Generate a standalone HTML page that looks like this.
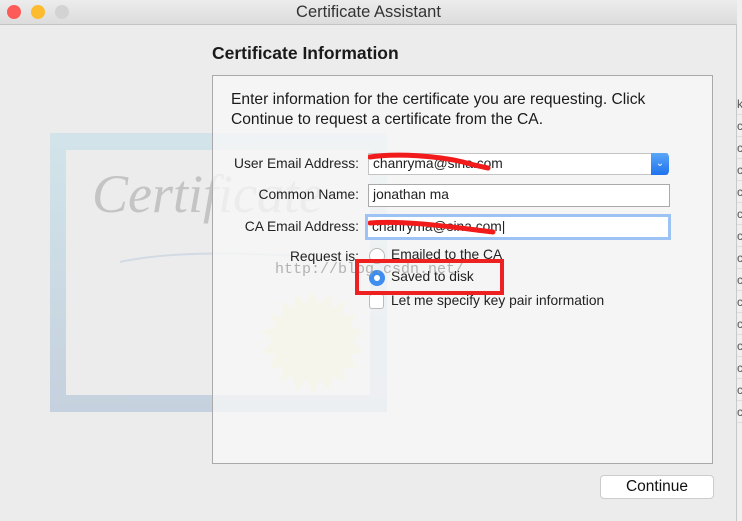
<!DOCTYPE html>
<html><head><style>
*{margin:0;padding:0;box-sizing:border-box}
body{width:742px;height:521px;overflow:hidden;background:#f0f0f0;font-family:"Liberation Sans",sans-serif;position:relative;color:#222}
.win{position:absolute;left:0;top:0;width:737px;height:521px;background:#ececec;border-right:1px solid #c8c8c8}
.tb{position:absolute;left:0;top:0;width:737px;height:25px;background:linear-gradient(#ececec,#dcdcdc);border-bottom:1px solid #c4c4c4;text-align:center;font-size:16.5px;line-height:25px;color:#333}
.dot{position:absolute;top:5px;width:14px;height:14px;border-radius:50%}
.abs{position:absolute}
.lbl{position:absolute;font-size:13.8px;text-align:right;width:160px;color:#222}
.fld{position:absolute;background:#fff;border:1px solid #b9b9b9;font-size:13.8px;line-height:20px;padding-left:4px}
.strip{position:absolute;left:737px;width:5px;height:21px;border-bottom:1px solid #ddd;font-size:12px;line-height:21px;color:#555;overflow:hidden}
</style></head><body>
<div class="win">
<div class="tb">Certificate Assistant</div>
<div class="dot" style="left:7px;background:#fc5b57"></div>
<div class="dot" style="left:31px;background:#fdbb2f"></div>
<div class="dot" style="left:55px;background:#d3d3d3"></div>
<div class="abs" style="left:212px;top:43px;font-size:17.5px;font-weight:bold;color:#1a1a1a">Certificate Information</div>
<div class="abs" style="left:50px;top:133px;width:337px;height:279px;background:linear-gradient(#d2e4ea,#c5d1de)"></div>
<div class="abs" style="left:66px;top:150px;width:304px;height:245px;background:#ececec"></div>
<div class="abs" style="left:92px;top:163px;font-family:'Liberation Serif',serif;font-style:italic;font-size:54px;color:#c4c4c4">Certificate</div>
<svg class="abs" style="left:115px;top:250px" width="240" height="20"><path d="M5,12 C60,0 140,2 235,10" stroke="#d2dbe4" stroke-width="2" fill="none"/></svg>
<div class="abs" style="left:212px;top:75px;width:501px;height:389px;background:rgba(247,247,247,0.78);border:1px solid #a9a9a9"></div>
<svg class="abs" style="left:258px;top:287px" width="110" height="110" viewBox="-55 -55 110 110"><polygon style="fill:#f6f5ec;stroke:none" points="0,-52 7,-38 17,-49 20,-34 32,-41 30,-26 44,-28 37,-15 51,-11 40,-1 51,10 37,13 44,27 30,25 32,40 20,34 16,49 7,38 0,52 -7,38 -17,49 -20,34 -32,40 -30,25 -44,27 -37,13 -51,10 -40,-1 -51,-11 -37,-15 -44,-28 -30,-26 -32,-41 -20,-34 -17,-49 -7,-38"/></svg>
<div class="abs" style="left:231px;top:90px;font-size:15.6px;line-height:20px;color:#1a1a1a;white-space:nowrap">Enter information for the certificate you are requesting. Click<br>Continue to request a certificate from the CA.</div>
<div class="lbl" style="left:199px;top:156px">User Email Address:</div>
<div class="fld" style="left:368px;top:153px;width:300px;height:22px;border-color:#c4c4c4">chanryma@sina.com</div>
<div class="abs" style="left:651px;top:153px;width:18px;height:22px;background:linear-gradient(#5aa6f8,#1f72ee);border-radius:0 4px 4px 0;color:#fff;font-size:10px;text-align:center;line-height:22px">&#8964;</div>
<div class="lbl" style="left:199px;top:187px">Common Name:</div>
<div class="fld" style="left:368px;top:184px;width:302px;height:23px;border-color:#aaa">jonathan ma</div>
<div class="lbl" style="left:199px;top:219px">CA Email Address:</div>
<div class="fld" style="left:365px;top:214px;width:306px;height:26px;border:3px solid #9cc3f3;line-height:19px">chanryma@sina.com|</div>
<svg class="abs" style="left:368px;top:150px" width="140" height="100"><path d="M2,7 C30,3 70,6 95,12 C105,15 115,17 120,18" stroke="#f21b1b" stroke-width="5" fill="none" stroke-linecap="round"/><path d="M2,73 C40,70 90,78 125,82" stroke="#f21b1b" stroke-width="5" fill="none" stroke-linecap="round"/></svg>
<div class="lbl" style="left:199px;top:249px">Request is:</div>
<div class="abs" style="left:369px;top:248px;width:16px;height:16px;border-radius:50%;background:#fff;border:1px solid #bbb"></div>
<div class="abs" style="left:391px;top:247px;font-size:13.8px">Emailed to the CA</div>
<div class="abs" style="left:369px;top:270px;width:16px;height:16px;border-radius:50%;background:#3d8ef0"><div style="margin:5px;width:6px;height:6px;border-radius:50%;background:#fff"></div></div>
<div class="abs" style="left:391px;top:269px;font-size:13.8px">Saved to disk</div>
<div class="abs" style="left:369px;top:294px;width:15px;height:15px;border-radius:3px;background:#fff;border:1px solid #bbb"></div>
<div class="abs" style="left:391px;top:293px;font-size:13.8px">Let me specify key pair information</div>
<div class="abs" style="left:275px;top:261px;font-family:'Liberation Mono',monospace;font-size:15px;color:rgba(150,150,150,0.7)">http://blog.csdn.net/</div>
<div class="abs" style="left:355px;top:259px;width:149px;height:36px;border:4px solid #ee2020"></div>
<div class="abs" style="left:600px;top:475px;width:114px;height:24px;background:#fff;border:1px solid #ccc;border-radius:4px;text-align:center;font-size:15.5px;line-height:22px;color:#111">Continue</div>
</div>
<div class="strip" style="top:94px">k</div>
<div class="strip" style="top:116px">c</div><div class="strip" style="top:138px">c</div><div class="strip" style="top:160px">c</div><div class="strip" style="top:182px">c</div><div class="strip" style="top:204px">c</div><div class="strip" style="top:226px">c</div><div class="strip" style="top:248px">c</div><div class="strip" style="top:270px">c</div><div class="strip" style="top:292px">c</div><div class="strip" style="top:314px">c</div><div class="strip" style="top:336px">c</div><div class="strip" style="top:358px">c</div><div class="strip" style="top:380px">c</div><div class="strip" style="top:402px">c</div>
</body></html>
